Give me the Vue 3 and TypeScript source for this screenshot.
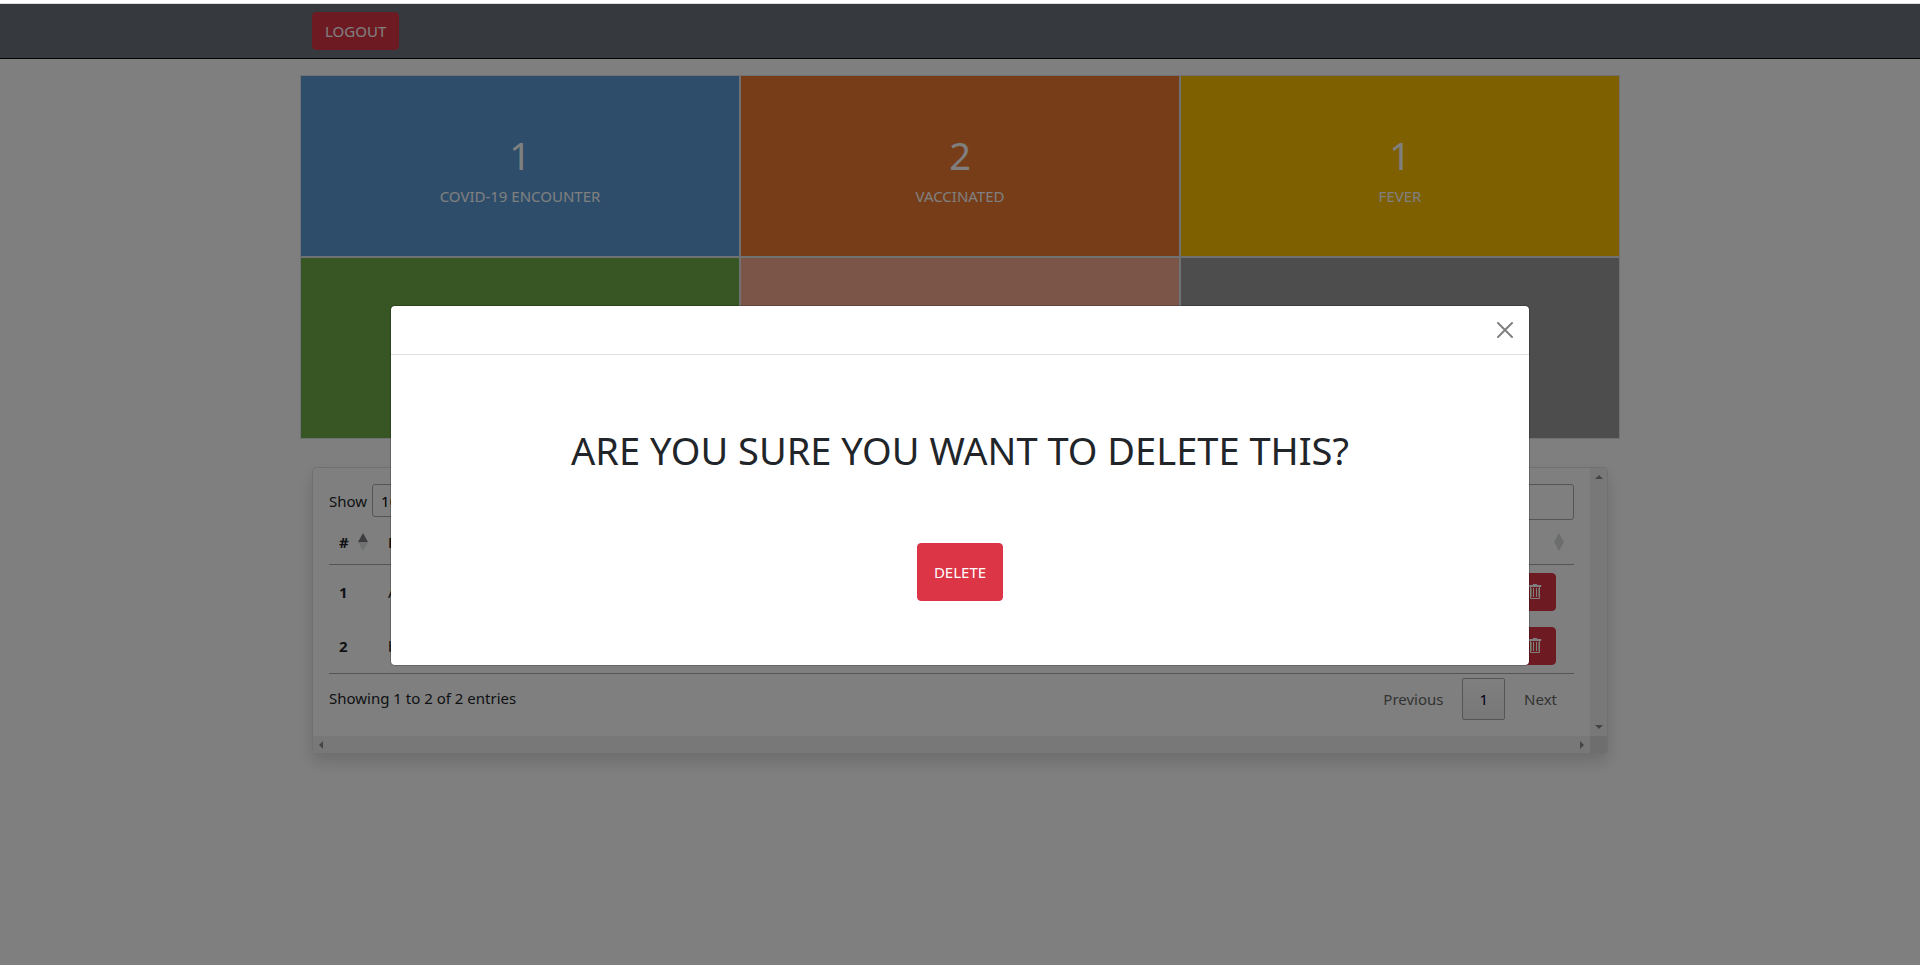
<script setup lang="ts">
import { ref } from 'vue'

interface Stat {
  label: string
  value: number
  tone: string
}

const stats: Stat[] = [
  { label: 'COVID-19 ENCOUNTER', value: 1, tone: 'blue' },
  { label: 'VACCINATED', value: 2, tone: 'orange' },
  { label: 'FEVER', value: 1, tone: 'gold' },
  { label: 'ADULT', value: 2, tone: 'green' },
  { label: 'MINOR', value: 0, tone: 'salmon' },
  { label: 'FOREIGNER', value: 0, tone: 'gray' },
]

const rows = [
  { id: 1, name: 'A' },
  { id: 2, name: 'b' },
]

const pageSize = ref('10')
const query = ref('')
</script>

<template>
  <div class="strip"></div>
  <div class="page">
    <nav class="navbar">
      <div class="container">
        <button type="button" class="btn">LOGOUT</button>
      </div>
    </nav>

    <main class="container">
      <section class="stats">
        <div v-for="s in stats" :key="s.label" class="stat" :class="s.tone">
          <div class="value">{{ s.value }}</div>
          <div>{{ s.label }}</div>
        </div>
      </section>

      <section class="card">
        <div class="content">
          <div class="controls">
            <label class="control">Show
              <select v-model="pageSize"><option>10</option></select>
            </label>
            <input v-model="query" type="search" aria-label="Search" />
          </div>
          <table>
            <thead>
              <tr>
                <th class="num">
                  <span class="head"># <svg width="10" height="18" viewBox="0 0 10 18"><path d="M0 9 5 0l5 9z" fill="#7b7b80" /><path d="M0 9h10l-5 9z" fill="#e0e4e4" /></svg></span>
                </th>
                <th>Name</th>
                <th>
                  <span class="head last"><svg width="10" height="18" viewBox="0 0 10 18"><path d="M0 9 5 0l5 9-5 9z" fill="#d8dcdb" /></svg></span>
                </th>
              </tr>
            </thead>
            <tbody>
              <tr v-for="r in rows" :key="r.id">
                <th>{{ r.id }}</th>
                <td>{{ r.name }}</td>
                <td class="action">
                  <button type="button" class="btn" aria-label="Delete entry">
                    <svg width="16" height="18" viewBox="0 0 16 18" fill="none" stroke="#fff">
                      <path d="M2 2.500h12v1H2zM6 1.500h4M3.500 4v11.500h9V4M6.500 5v9M9.500 5v9" />
                      <path d="M4.500 5v9M11.500 5v9" stroke="#e0b080" />
                    </svg>
                  </button>
                </td>
              </tr>
            </tbody>
          </table>
          <div class="footer">
            <span>Showing 1 to 2 of 2 entries</span>
            <div class="pager">
              <button type="button" class="page-btn">Previous</button>
              <button type="button" class="page-btn current">1</button>
              <button type="button" class="page-btn">Next</button>
            </div>
          </div>
        </div>
        <div class="bar vertical">
          <svg width="8" height="4" viewBox="0 0 8 4"><path d="M0 4 4 0l4 4z" /></svg>
          <svg width="8" height="4" viewBox="0 0 8 4"><path d="M0 0h8L4 4z" /></svg>
        </div>
        <div class="bar">
          <svg width="4" height="8" viewBox="0 0 4 8"><path d="M4 0v8L0 4z" /></svg>
          <svg width="4" height="8" viewBox="0 0 4 8"><path d="M0 0v8l4-4z" /></svg>
        </div>
        <div class="corner"></div>
      </section>
    </main>

    <div class="overlay">
      <div class="modal" role="dialog" aria-modal="true" aria-labelledby="modal-title">
        <header>
          <button type="button" class="close" aria-label="Close">
            <svg width="16" height="16" viewBox="0 0 16 16" stroke="#808080" stroke-width="2" stroke-linecap="round"><path d="M1 1l14 14M15 1 1 15" /></svg>
          </button>
        </header>
        <div class="body">
          <h1 id="modal-title">ARE YOU SURE YOU WANT TO DELETE THIS?</h1>
          <button type="button" class="btn large">DELETE</button>
        </div>
      </div>
    </div>
  </div>
</template>

<style>
body {
  margin: 0;
  background: #fff;
}
</style>

<style scoped>
.strip {
  height: 3px;
  border-bottom: 1px solid #dcdcdc;
}
.page {
  position: relative;
  min-height: calc(100vh - 4px);
  font: 15px/24px 'Noto Sans', 'Open Sans', sans-serif;
  color: #212529;
}
.page *,
.page {
  box-sizing: border-box;
}
button,
input,
select {
  font: inherit;
}
svg {
  display: block;
}
.container {
  max-width: 1320px;
  margin: 0 auto;
}
.navbar {
  padding: 8px 0;
  background: #6c757d;
  border-bottom: 1px solid #000;
}
.navbar .container {
  display: flex;
  padding: 0 12px;
}
.btn {
  height: 38px;
  padding: 0 12px;
  border: 1px solid #dc3545;
  border-radius: 4px;
  background: #dc3545;
  color: #fff;
}
.stats {
  display: grid;
  grid-template-columns: repeat(3, 1fr);
  margin-top: 16px;
}
.stat {
  display: flex;
  flex-direction: column;
  align-items: center;
  padding: 55px 0 48px;
  border: 1px solid #dee2e6;
  color: #fff;
}
.value {
  margin-bottom: 5px;
  font-size: 38px;
  line-height: 48px;
}
.blue { background: #5b9bd5; }
.orange { background: #ed7a31; }
.gold { background: #ffc000; }
.green { background: #70ad47; }
.salmon { background: #f6aa8e; }
.gray { background: #9a9a9a; }
.card {
  display: grid;
  grid-template-columns: 1fr 17px;
  grid-template-rows: auto 17px;
  margin: 28px 12px 0;
  overflow: hidden;
  border: 1px solid #e0e0e0;
  border-radius: 4px;
  background: #fff;
  box-shadow: 0 8px 16px rgba(0, 0, 0, 0.15);
}
.content {
  padding: 16px;
}
.bar {
  display: flex;
  align-items: center;
  justify-content: space-between;
  padding: 0 6px;
  background: #f1f1f1;
}
.bar.vertical {
  flex-direction: column;
  padding: 7px 0;
}
.bar path {
  fill: #8b8b8b;
}
.corner {
  background: #dcdcdc;
}
.controls {
  display: flex;
  align-items: flex-start;
  justify-content: space-between;
}
.control {
  display: flex;
  align-items: center;
  gap: 5px;
}
select {
  width: 60px;
  height: 33px;
  padding: 4px;
  border: 1px solid #aaa;
  border-radius: 3px;
  background: transparent;
}
input {
  width: 190px;
  height: 36px;
  border: 1px solid #aaa;
  border-radius: 3px;
  background: transparent;
}
table {
  width: 100%;
  table-layout: fixed;
  border-collapse: separate;
  border-spacing: 0;
  border-bottom: 1px solid #aaa;
}
th,
td {
  padding: 8px 10px;
  text-align: left;
}
thead th {
  padding: 10px;
  border-bottom: 1px solid #aaa;
}
thead .num {
  width: 49px;
  padding-right: 6px;
}
.head {
  display: flex;
  align-items: center;
  gap: 9px;
}
.head svg {
  flex: none;
}
.last {
  height: 24px;
  justify-content: flex-end;
}
.action .btn {
  display: block;
  margin: 0 8px 0 auto;
}
.footer {
  display: flex;
  align-items: flex-start;
  justify-content: space-between;
  padding-top: 4px;
}
.footer > span {
  padding-top: 8px;
}
.pager {
  display: flex;
  gap: 2px;
}
.page-btn {
  height: 42px;
  padding: 0 16px;
  border: 1px solid transparent;
  border-radius: 2px;
  background: none;
  color: #666;
}
.current {
  border-color: #aaa;
  background: linear-gradient(#fff, #efefef);
  color: #000033;
}
.overlay {
  position: absolute;
  inset: 0;
  display: flex;
  align-items: center;
  justify-content: center;
  padding-top: 2px;
  background: rgba(0, 0, 0, 0.5);
}
.modal {
  width: 1140px;
  max-width: 95%;
  border: 1px solid rgba(0, 0, 0, 0.2);
  border-radius: 5px;
  background: #fff;
  background-clip: padding-box;
}
.modal header {
  display: flex;
  justify-content: flex-end;
  padding: 16px;
  border-bottom: 1px solid #dee2e6;
}
.close {
  padding: 0;
  border: 0;
  background: none;
}
.body {
  display: flex;
  flex-direction: column;
  align-items: center;
  gap: 69px;
  padding: 71px 16px 64px;
}
h1 {
  margin: 0;
  font-size: 38px;
  font-weight: 400;
  line-height: 48px;
}
.large {
  height: 58px;
  padding: 0 16px;
}
</style>
